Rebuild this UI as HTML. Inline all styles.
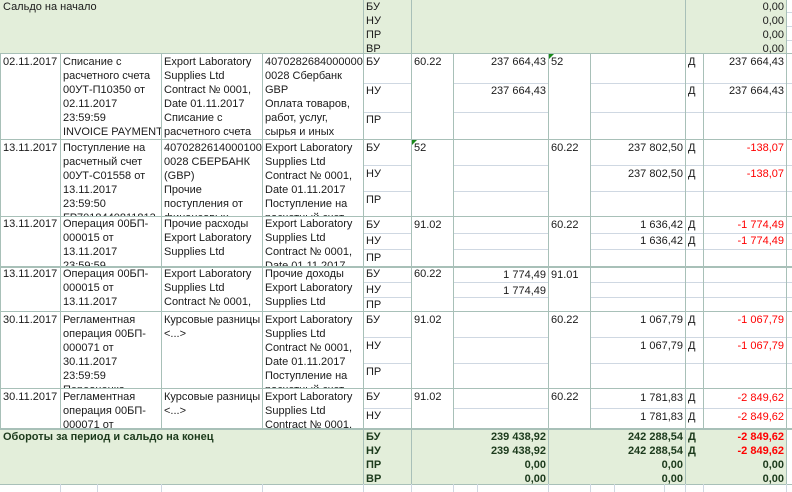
<!DOCTYPE html>
<html><head><meta charset="utf-8"><style>
body{margin:0;width:792px;height:492px;position:relative;overflow:hidden;background:#fff;font-family:"Liberation Sans",Arial,sans-serif;}
.g{position:absolute;background:#e3eeda}
.h{position:absolute;height:1px;background:#a8c0b8}
.s{position:absolute;height:1px;background:#cfd8e2}
.v{position:absolute;width:1px;background:#a8c0b8}
.t{position:absolute;overflow:hidden;font-size:11px;line-height:14px;color:#1a1a1a;padding:0 2px;box-sizing:border-box;white-space:nowrap}
.r{text-align:right}
.red{color:#f00}
.b{font-weight:bold;color:#1c3a1c}
.tri{position:absolute;width:0;height:0;border-top:5px solid #1a8a1a;border-right:5px solid transparent}
</style></head><body>
<div class="g" style="left:0;top:0;width:786px;height:53px"></div>
<div class="g" style="left:0;top:428px;width:786px;height:56px"></div>

<div class="h" style="left:0;top:53px;width:792px"></div>
<div class="h" style="left:0;top:139px;width:792px"></div>
<div class="h" style="left:0;top:216px;width:792px"></div>
<div class="h" style="left:0;top:266px;width:792px;height:2px"></div>
<div class="h" style="left:0;top:311px;width:792px"></div>
<div class="h" style="left:0;top:388px;width:792px"></div>
<div class="h" style="left:0;top:428px;width:792px;height:2px"></div>
<div class="h" style="left:0;top:484px;width:792px"></div>
<div class="s" style="left:786px;top:12px;width:6px"></div>
<div class="s" style="left:786px;top:26px;width:6px"></div>
<div class="s" style="left:786px;top:40px;width:6px"></div>

<div class="s" style="left:363px;top:83px;width:48px"></div><div class="s" style="left:453px;top:83px;width:95px"></div><div class="s" style="left:590px;top:83px;width:202px"></div>
<div class="s" style="left:363px;top:112px;width:48px"></div><div class="s" style="left:453px;top:112px;width:95px"></div><div class="s" style="left:590px;top:112px;width:202px"></div>
<div class="s" style="left:363px;top:165px;width:48px"></div><div class="s" style="left:453px;top:165px;width:95px"></div><div class="s" style="left:590px;top:165px;width:202px"></div>
<div class="s" style="left:363px;top:191px;width:48px"></div><div class="s" style="left:453px;top:191px;width:95px"></div><div class="s" style="left:590px;top:191px;width:202px"></div>
<div class="s" style="left:363px;top:233px;width:48px"></div><div class="s" style="left:453px;top:233px;width:95px"></div><div class="s" style="left:590px;top:233px;width:202px"></div>
<div class="s" style="left:363px;top:249px;width:48px"></div><div class="s" style="left:453px;top:249px;width:95px"></div><div class="s" style="left:590px;top:249px;width:202px"></div>
<div class="s" style="left:363px;top:282px;width:48px"></div><div class="s" style="left:453px;top:282px;width:95px"></div><div class="s" style="left:590px;top:282px;width:202px"></div>
<div class="s" style="left:363px;top:297px;width:48px"></div><div class="s" style="left:453px;top:297px;width:95px"></div><div class="s" style="left:590px;top:297px;width:202px"></div>
<div class="s" style="left:363px;top:337px;width:48px"></div><div class="s" style="left:453px;top:337px;width:95px"></div><div class="s" style="left:590px;top:337px;width:202px"></div>
<div class="s" style="left:363px;top:363px;width:48px"></div><div class="s" style="left:453px;top:363px;width:95px"></div><div class="s" style="left:590px;top:363px;width:202px"></div>
<div class="s" style="left:363px;top:408px;width:48px"></div><div class="s" style="left:453px;top:408px;width:95px"></div><div class="s" style="left:590px;top:408px;width:202px"></div>

<div class="v" style="left:363px;top:0;height:53px"></div>
<div class="v" style="left:411px;top:0;height:53px"></div>
<div class="v" style="left:685px;top:0;height:53px"></div>
<div class="v" style="left:786px;top:0;height:53px"></div>
<div class="v" style="left:0;top:53px;height:375px"></div>
<div class="v" style="left:60px;top:53px;height:375px"></div>
<div class="v" style="left:161px;top:53px;height:375px"></div>
<div class="v" style="left:262px;top:53px;height:375px"></div>
<div class="v" style="left:363px;top:53px;height:375px"></div>
<div class="v" style="left:411px;top:53px;height:375px"></div>
<div class="v" style="left:453px;top:53px;height:375px"></div>
<div class="v" style="left:548px;top:53px;height:375px"></div>
<div class="v" style="left:590px;top:53px;height:375px"></div>
<div class="v" style="left:685px;top:53px;height:375px"></div>
<div class="v" style="left:703px;top:53px;height:375px"></div>
<div class="v" style="left:786px;top:53px;height:375px"></div>
<div class="v" style="left:363px;top:428px;height:56px"></div>
<div class="v" style="left:411px;top:428px;height:56px"></div>
<div class="v" style="left:548px;top:428px;height:56px"></div>
<div class="v" style="left:685px;top:428px;height:56px"></div>
<div class="v" style="left:786px;top:428px;height:56px"></div>
<div class="v" style="left:60px;top:484px;height:8px;background:#cfd8e2"></div>
<div class="v" style="left:97px;top:484px;height:8px;background:#cfd8e2"></div>
<div class="v" style="left:161px;top:484px;height:8px;background:#cfd8e2"></div>
<div class="v" style="left:262px;top:484px;height:8px;background:#cfd8e2"></div>
<div class="v" style="left:363px;top:484px;height:8px;background:#cfd8e2"></div>
<div class="v" style="left:411px;top:484px;height:8px;background:#cfd8e2"></div>
<div class="v" style="left:453px;top:484px;height:8px;background:#cfd8e2"></div>
<div class="v" style="left:477px;top:484px;height:8px;background:#cfd8e2"></div>
<div class="v" style="left:548px;top:484px;height:8px;background:#cfd8e2"></div>
<div class="v" style="left:590px;top:484px;height:8px;background:#cfd8e2"></div>
<div class="v" style="left:614px;top:484px;height:8px;background:#cfd8e2"></div>
<div class="v" style="left:664px;top:484px;height:8px;background:#cfd8e2"></div>
<div class="v" style="left:685px;top:484px;height:8px;background:#cfd8e2"></div>
<div class="v" style="left:703px;top:484px;height:8px;background:#cfd8e2"></div>
<div class="v" style="left:786px;top:484px;height:8px;background:#cfd8e2"></div>

<div class="tri" style="left:549px;top:54px"></div>
<div class="tri" style="left:412px;top:140px"></div>

<div class="t" style="left:1px;top:0;width:300px;height:14px">Сальдо на начало</div>
<div class="t" style="left:364px;top:0;width:46px;height:56px">БУ<br>НУ<br>ПР<br>ВР</div>
<div class="t r" style="left:686px;top:0;width:100px;height:56px">0,00<br>0,00<br>0,00<br>0,00</div>

<div class="t" style="left:1px;top:55px;width:59px;height:84px">02.11.2017</div>
<div class="t" style="left:61px;top:55px;width:100px;height:84px">Списание с<br>расчетного счета<br>00УТ-П10350 от<br>02.11.2017<br>23:59:59<br>INVOICE PAYMENT</div>
<div class="t" style="left:162px;top:55px;width:100px;height:84px">Export Laboratory<br>Supplies Ltd<br>Contract № 0001,<br>Date 01.11.2017<br>Списание с<br>расчетного счета</div>
<div class="t" style="left:263px;top:55px;width:100px;height:84px">4070282684000000<br>0028 Сбербанк<br>GBP<br>Оплата товаров,<br>работ, услуг,<br>сырья и иных</div>
<div class="t" style="left:364px;top:55px;width:46px;height:14px">БУ</div>
<div class="t" style="left:364px;top:84px;width:46px;height:14px">НУ</div>
<div class="t" style="left:364px;top:113px;width:46px;height:14px">ПР</div>
<div class="t" style="left:412px;top:55px;width:41px;height:14px">60.22</div>
<div class="t r" style="left:454px;top:55px;width:94px;height:14px">237 664,43</div>
<div class="t r" style="left:454px;top:84px;width:94px;height:14px">237 664,43</div>
<div class="t" style="left:549px;top:55px;width:41px;height:14px">52</div>
<div class="t" style="left:686px;top:55px;width:17px;height:14px">Д</div>
<div class="t r" style="left:704px;top:55px;width:82px;height:14px">237 664,43</div>
<div class="t" style="left:686px;top:84px;width:17px;height:14px">Д</div>
<div class="t r" style="left:704px;top:84px;width:82px;height:14px">237 664,43</div>

<div class="t" style="left:1px;top:141px;width:59px;height:75px">13.11.2017</div>
<div class="t" style="left:61px;top:141px;width:100px;height:75px">Поступление на<br>расчетный счет<br>00УТ-С01558 от<br>13.11.2017<br>23:59:50<br>FP7018440811813</div>
<div class="t" style="left:162px;top:141px;width:100px;height:75px">4070282614000100<br>0028 СБЕРБАНК<br>(GBP)<br>Прочие<br>поступления от<br>финансовых</div>
<div class="t" style="left:263px;top:141px;width:100px;height:75px">Export Laboratory<br>Supplies Ltd<br>Contract № 0001,<br>Date 01.11.2017<br>Поступление на<br>расчетный счет</div>
<div class="t" style="left:364px;top:141px;width:46px;height:14px">БУ</div>
<div class="t" style="left:364px;top:167px;width:46px;height:14px">НУ</div>
<div class="t" style="left:364px;top:193px;width:46px;height:14px">ПР</div>
<div class="t" style="left:412px;top:141px;width:41px;height:14px">52</div>
<div class="t" style="left:549px;top:141px;width:41px;height:14px">60.22</div>
<div class="t r" style="left:591px;top:141px;width:94px;height:14px">237 802,50</div>
<div class="t r" style="left:591px;top:167px;width:94px;height:14px">237 802,50</div>
<div class="t" style="left:686px;top:141px;width:17px;height:14px">Д</div>
<div class="t r red" style="left:704px;top:141px;width:82px;height:14px">-138,07</div>
<div class="t" style="left:686px;top:167px;width:17px;height:14px">Д</div>
<div class="t r red" style="left:704px;top:167px;width:82px;height:14px">-138,07</div>

<div class="t" style="left:1px;top:217px;width:59px;height:49px">13.11.2017</div>
<div class="t" style="left:61px;top:217px;width:100px;height:49px">Операция 00БП-<br>000015 от<br>13.11.2017<br>23:59:59</div>
<div class="t" style="left:162px;top:217px;width:100px;height:49px">Прочие расходы<br>Export Laboratory<br>Supplies Ltd</div>
<div class="t" style="left:263px;top:217px;width:100px;height:49px">Export Laboratory<br>Supplies Ltd<br>Contract № 0001,<br>Date 01.11.2017</div>
<div class="t" style="left:364px;top:218px;width:46px;height:14px">БУ</div>
<div class="t" style="left:364px;top:234px;width:46px;height:14px">НУ</div>
<div class="t" style="left:364px;top:251px;width:46px;height:14px">ПР</div>
<div class="t" style="left:412px;top:218px;width:41px;height:14px">91.02</div>
<div class="t" style="left:549px;top:218px;width:41px;height:14px">60.22</div>
<div class="t r" style="left:591px;top:218px;width:94px;height:14px">1 636,42</div>
<div class="t r" style="left:591px;top:234px;width:94px;height:14px">1 636,42</div>
<div class="t" style="left:686px;top:218px;width:17px;height:14px">Д</div>
<div class="t r red" style="left:704px;top:218px;width:82px;height:14px">-1 774,49</div>
<div class="t" style="left:686px;top:234px;width:17px;height:14px">Д</div>
<div class="t r red" style="left:704px;top:234px;width:82px;height:14px">-1 774,49</div>

<div class="t" style="left:1px;top:267px;width:59px;height:44px">13.11.2017</div>
<div class="t" style="left:61px;top:267px;width:100px;height:44px">Операция 00БП-<br>000015 от<br>13.11.2017</div>
<div class="t" style="left:162px;top:267px;width:100px;height:44px">Export Laboratory<br>Supplies Ltd<br>Contract № 0001,</div>
<div class="t" style="left:263px;top:267px;width:100px;height:44px">Прочие доходы<br>Export Laboratory<br>Supplies Ltd</div>
<div class="t" style="left:364px;top:267px;width:46px;height:14px">БУ</div>
<div class="t" style="left:364px;top:283px;width:46px;height:14px">НУ</div>
<div class="t" style="left:364px;top:298px;width:46px;height:13px">ПР</div>
<div class="t" style="left:412px;top:267px;width:41px;height:14px">60.22</div>
<div class="t r" style="left:454px;top:268px;width:94px;height:14px">1 774,49</div>
<div class="t r" style="left:454px;top:284px;width:94px;height:14px">1 774,49</div>
<div class="t" style="left:549px;top:268px;width:41px;height:14px">91.01</div>

<div class="t" style="left:1px;top:313px;width:59px;height:75px">30.11.2017</div>
<div class="t" style="left:61px;top:313px;width:100px;height:75px">Регламентная<br>операция 00БП-<br>000071 от<br>30.11.2017<br>23:59:59<br>Переоценка</div>
<div class="t" style="left:162px;top:313px;width:100px;height:75px">Курсовые разницы<br>&lt;...&gt;</div>
<div class="t" style="left:263px;top:313px;width:100px;height:75px">Export Laboratory<br>Supplies Ltd<br>Contract № 0001,<br>Date 01.11.2017<br>Поступление на<br>расчетный счет</div>
<div class="t" style="left:364px;top:313px;width:46px;height:14px">БУ</div>
<div class="t" style="left:364px;top:339px;width:46px;height:14px">НУ</div>
<div class="t" style="left:364px;top:365px;width:46px;height:14px">ПР</div>
<div class="t" style="left:412px;top:313px;width:41px;height:14px">91.02</div>
<div class="t" style="left:549px;top:313px;width:41px;height:14px">60.22</div>
<div class="t r" style="left:591px;top:313px;width:94px;height:14px">1 067,79</div>
<div class="t r" style="left:591px;top:339px;width:94px;height:14px">1 067,79</div>
<div class="t" style="left:686px;top:313px;width:17px;height:14px">Д</div>
<div class="t r red" style="left:704px;top:313px;width:82px;height:14px">-1 067,79</div>
<div class="t" style="left:686px;top:339px;width:17px;height:14px">Д</div>
<div class="t r red" style="left:704px;top:339px;width:82px;height:14px">-1 067,79</div>

<div class="t" style="left:1px;top:390px;width:59px;height:38px">30.11.2017</div>
<div class="t" style="left:61px;top:390px;width:100px;height:38px">Регламентная<br>операция 00БП-<br>000071 от</div>
<div class="t" style="left:162px;top:390px;width:100px;height:38px">Курсовые разницы<br>&lt;...&gt;</div>
<div class="t" style="left:263px;top:390px;width:100px;height:38px">Export Laboratory<br>Supplies Ltd<br>Contract № 0001,</div>
<div class="t" style="left:364px;top:390px;width:46px;height:14px">БУ</div>
<div class="t" style="left:364px;top:409px;width:46px;height:14px">НУ</div>
<div class="t" style="left:412px;top:390px;width:41px;height:14px">91.02</div>
<div class="t" style="left:549px;top:390px;width:41px;height:14px">60.22</div>
<div class="t r" style="left:591px;top:391px;width:94px;height:14px">1 781,83</div>
<div class="t r" style="left:591px;top:410px;width:94px;height:14px">1 781,83</div>
<div class="t" style="left:686px;top:391px;width:17px;height:14px">Д</div>
<div class="t r red" style="left:704px;top:391px;width:82px;height:14px">-2 849,62</div>
<div class="t" style="left:686px;top:410px;width:17px;height:14px">Д</div>
<div class="t r red" style="left:704px;top:410px;width:82px;height:14px">-2 849,62</div>

<div class="t b" style="left:1px;top:430px;width:360px;height:14px">Обороты за период и сальдо на конец</div>
<div class="t b" style="left:364px;top:430px;width:46px;height:56px">БУ<br>НУ<br>ПР<br>ВР</div>
<div class="t b r" style="left:412px;top:430px;width:136px;height:56px">239 438,92<br>239 438,92<br>0,00<br>0,00</div>
<div class="t b r" style="left:549px;top:430px;width:136px;height:56px">242 288,54<br>242 288,54<br>0,00<br>0,00</div>
<div class="t b" style="left:686px;top:430px;width:17px;height:28px">Д<br>Д</div>
<div class="t b r" style="left:704px;top:430px;width:82px;height:56px"><span style="color:#f00">-2 849,62</span><br><span style="color:#f00">-2 849,62</span><br>0,00<br>0,00</div>
</body></html>
